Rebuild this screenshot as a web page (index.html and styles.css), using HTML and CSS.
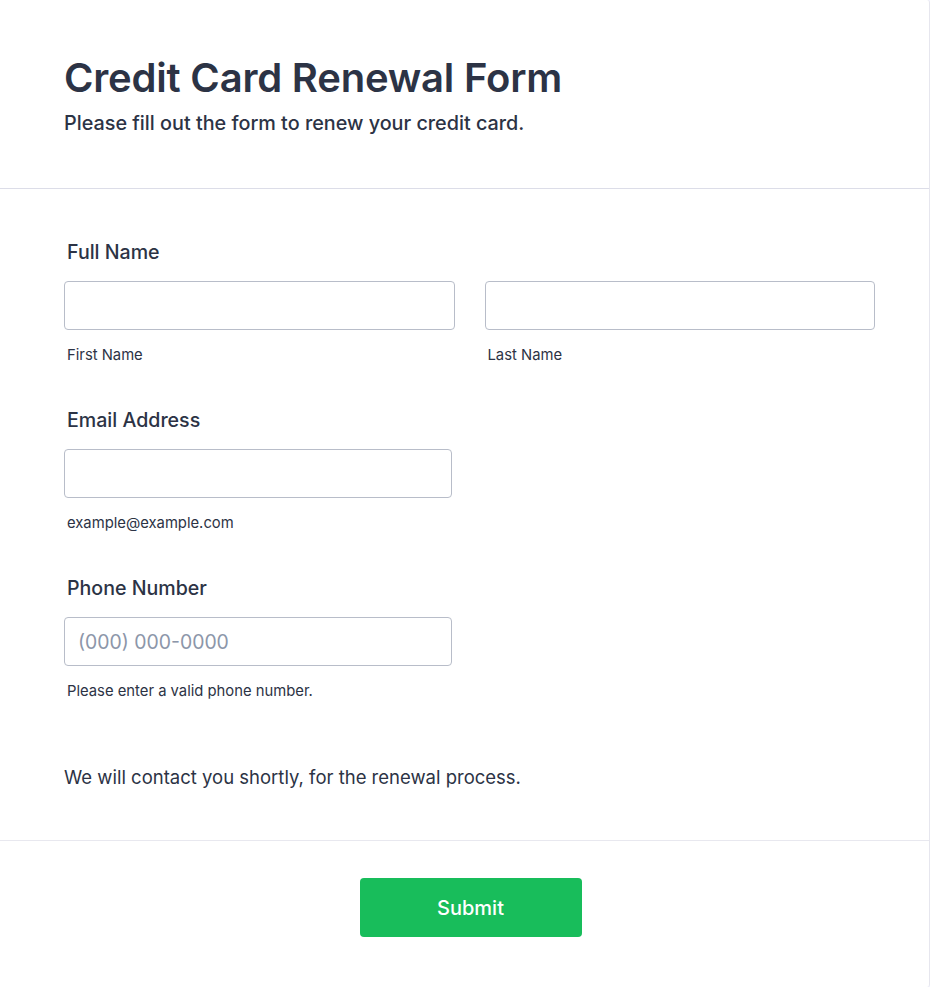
FILE: index.html
```html
<!DOCTYPE html>
<html lang="en">
<head>
<meta charset="utf-8">
<title>Credit Card Renewal Form</title>
<link rel="stylesheet" href="styles.css">
</head>
<body>
<main class="card">
  <header class="form-header">
    <h1 class="title">Credit Card Renewal Form</h1>
    <p class="subtitle">Please fill out the form to renew your credit card.</p>
  </header>
  <section class="form-body">
    <div class="field">
      <label class="label">Full Name</label>
      <div class="row">
        <div class="col">
          <input class="input" type="text">
          <span class="sublabel">First Name</span>
        </div>
        <div class="col">
          <input class="input" type="text">
          <span class="sublabel">Last Name</span>
        </div>
      </div>
    </div>
    <div class="field">
      <label class="label">Email Address</label>
      <div class="col narrow">
        <input class="input" type="email">
        <span class="sublabel">example@example.com</span>
      </div>
    </div>
    <div class="field last">
      <label class="label">Phone Number</label>
      <div class="col narrow">
        <input class="input" type="tel" placeholder="(000) 000-0000">
        <span class="sublabel">Please enter a valid phone number.</span>
      </div>
    </div>
    <p class="note">We will contact you shortly, for the renewal process.</p>
  </section>
  <footer class="form-footer">
    <button class="submit" type="button">Submit</button>
  </footer>
</main>
</body>
</html>
```

FILE: styles.css
```css
* { box-sizing: border-box; }
html, body { margin: 0; padding: 0; }
body {
  background: #f3f3fe;
  font-family: Inter, "Noto Sans", "Liberation Sans", sans-serif;
  color: #2c3345;
}
.card {
  width: 930px;
  min-height: 987px;
  background: #fff;
  border-right: 1px solid #e6e6ee;
  border-top-right-radius: 3px;
  border-bottom-right-radius: 3px;
}
.form-header {
  padding: 54px 64px 51px;
  border-bottom: 1px solid #dcdde8;
}
.title {
  margin: 0;
  font-size: 40px;
  line-height: 48px;
  font-weight: 600;
  letter-spacing: -0.2px;
}
.subtitle {
  margin: 7px 0 0;
  font-size: 19.8px;
  line-height: 28px;
  font-weight: 500;
}
.form-body {
  padding: 51px 54px 51px 64px;
  border-bottom: 1px solid #e8e8ef;
}
.field {
  display: flex;
  flex-direction: column;
  margin-bottom: 44px;
}
.field.last { margin-bottom: 65px; }
.label {
  padding-left: 3px;
  font-size: 19.6px;
  line-height: 24px;
  font-weight: 500;
  margin-bottom: 17px;
}
.row {
  display: flex;
  gap: 30px;
}
.col {
  display: flex;
  flex-direction: column;
  flex: 1;
}
.col.narrow {
  flex: none;
  width: 388px;
}
.input {
  height: 49px;
  width: 100%;
  border: 1px solid #b8bdc9;
  border-radius: 4px;
  padding: 0 13px;
  font-family: inherit;
  font-size: 19.4px;
  color: #2c3345;
  background: #fff;
}
.input::placeholder { color: #8c96a9; }
.sublabel {
  padding-left: 3px;
  margin-top: 16px;
  font-size: 14.8px;
  line-height: 18px;
  color: #2c3345;
}
.note {
  margin: 0;
  font-size: 18.5px;
  line-height: 24px;
}
.form-footer {
  display: flex;
  justify-content: center;
  padding: 37px 0 48px;
}
.submit {
  width: 222px;
  height: 59px;
  margin-left: 12px;
  background: #18bd5b;
  border: none;
  border-radius: 4px;
  color: #fff;
  font-family: inherit;
  font-size: 20px;
  font-weight: 500;
}
```
